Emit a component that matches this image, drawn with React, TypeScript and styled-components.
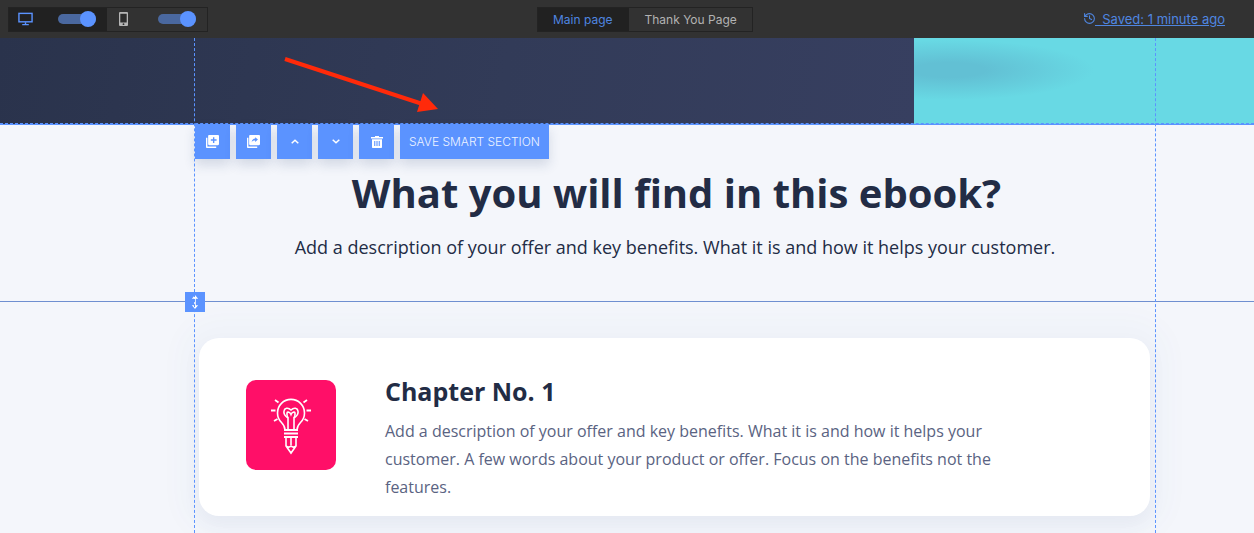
import React from "react";
import styled, { createGlobalStyle } from "styled-components";
import { History } from "lucide-react";

const GlobalStyle = createGlobalStyle`
  html, body { margin: 0; padding: 0; background: #f4f6fb; }
  body { height: 533px; overflow: hidden; font-family: "Open Sans", "Noto Sans", sans-serif; }
`;

const App: React.FC = () => {
  return (
    <Page>
      <GlobalStyle />
      <TopBar>
        <DeviceGroup>
          <DeviceCell $active>
            <svg width="15" height="14" viewBox="0 0 16 14" fill="none" stroke="#5b93ff">
              <rect x="1" y="1" width="14" height="9" strokeWidth="1.500" />
              <path d="M8 10.500v2M4.500 13h7" strokeWidth="1.500" />
            </svg>
            <Toggle />
          </DeviceCell>
          <DeviceCell>
            <svg width="9" height="14" viewBox="0 0 9 14">
              <rect x="0" y="0" width="9" height="14" rx="1" fill="#b5b5b5" />
              <rect x="1.300" y="1.800" width="6.400" height="8.700" fill="#2c2c2c" />
              <circle cx="4.500" cy="12.200" r="0.900" fill="#2c2c2c" />
            </svg>
            <Toggle />
          </DeviceCell>
        </DeviceGroup>
        <PageTabs>
          <PageTab $active>Main page</PageTab>
          <PageTab>Thank You Page</PageTab>
        </PageTabs>
        <SavedLink>
          <History size={13} strokeWidth={2} />
          <span>&nbsp;&nbsp;Saved: 1 minute ago</span>
        </SavedLink>
      </TopBar>

      <Hero>
        <HeroDark>
          <Arrow width="170" height="80" viewBox="0 0 170 80">
            <line x1="1" y1="2" x2="137" y2="46.500" stroke="#ff2a0a" strokeWidth="4" />
            <polygon points="139,36 154,52 133,55" fill="#ff2a0a" />
          </Arrow>
        </HeroDark>
        <HeroLight>
          <HeroShade />
        </HeroLight>
      </Hero>

      <Section>
        <Toolbar>
          <ToolButton>
            <svg width="13" height="13" viewBox="0 0 14 14" fill="#fff">
              <path d="M0 3h1.500v9.500H11V14H1.200C.5 14 0 13.500 0 12.800z" />
              <path fillRule="evenodd" d="M3.500 0h9.300c.7 0 1.200.5 1.200 1.200v8.600c0 .7-.5 1.200-1.200 1.200H3.500c-.7 0-1.200-.5-1.200-1.200V1.200C2.300.5 2.800 0 3.500 0zM7.500 2.300v2.300H5.200v1.700h2.300v2.400h1.500V6.300h2.400V4.600H9V2.300z" />
            </svg>
          </ToolButton>
          <ToolButton>
            <svg width="13" height="13" viewBox="0 0 14 14" fill="#fff">
              <path d="M0 3h1.500v9.500H11V14H1.200C.5 14 0 13.500 0 12.800z" />
              <path fillRule="evenodd" d="M3.500 0h9.300c.7 0 1.200.5 1.200 1.200v8.600c0 .7-.5 1.200-1.200 1.200H3.500c-.7 0-1.200-.5-1.200-1.200V1.200C2.300.5 2.800 0 3.500 0zM8.800 2.400v1.500C6.800 4 5.500 5.300 5 7.700c.9-1.200 2.200-1.700 3.800-1.700v1.500l3-2.600z" />
            </svg>
          </ToolButton>
          <ToolButton>
            <svg width="8" height="5" viewBox="0 0 8 5" fill="none" stroke="#fff" strokeWidth="1.500">
              <path d="M.7 4.300L4 1.200l3.300 3.100" />
            </svg>
          </ToolButton>
          <ToolButton>
            <svg width="8" height="5" viewBox="0 0 8 5" fill="none" stroke="#fff" strokeWidth="1.500">
              <path d="M.7.700L4 3.800 7.300.7" />
            </svg>
          </ToolButton>
          <ToolButton>
            <svg width="12" height="12" viewBox="0 0 12 12" fill="#fff">
              <path d="M4 0h4v1h4v1.500H0V1h4z" />
              <path fillRule="evenodd" d="M1 3.300h10V11c0 .6-.4 1-1 1H2c-.6 0-1-.4-1-1zM3.200 5v5h1.100V5zM5.450 5v5h1.100V5zM7.700 5v5h1.100V5z" />
            </svg>
          </ToolButton>
          <SaveButton>SAVE SMART SECTION</SaveButton>
        </Toolbar>

        <Heading>What you will find in this ebook?</Heading>
        <Lead>Add a description of your offer and key benefits. What it is and how it helps your customer.</Lead>
      </Section>

      <Divider>
        <ResizeHandle>
          <svg width="10" height="14" viewBox="0 0 10 14" fill="#fff">
            <path d="M5 0l3.200 3.700H5.800v6.600h2.400L5 14l-3.200-3.700h2.400V3.700H1.800z" />
          </svg>
        </ResizeHandle>
      </Divider>

      <CardWrap>
        <Card>
          <IconTile>
            <svg width="46" height="62" viewBox="0 0 46 62" fill="none" stroke="#fff" strokeWidth="1.600">
              <path d="M17 36c0-3-1-5-3.500-7.500a13.500 13.500 0 1 1 19 0C30 31 29 33 29 36" />
              <path d="M20 36V24c-3-2-4.500-4.500-4-7 .5-3 4-4 7-1 3-3 6.500-2 7 1 .5 2.500-1 5-4 7v12" />
              <path d="M20 24c-1-2-1.500-3-1-5 .5-1.500 3-1 4 1.500 1-2.500 3.500-3 4-1.500.5 2 0 3-1 5" />
              <path d="M16 36h14M16 39.500h14M16 43h14" strokeWidth="1.800" />
              <path d="M18 43v9l5 7 5-7v-9M23 43v8M18 52c2 1.500 3.500 1.500 5 0 1.500 1.500 3 1.500 5 0" />
              <path d="M7 6l3.500 2.500M39 6l-3.500 2.500M3 16.500h4.500M43 16.500h-4.500M6 27l3.500-2M40 27l-3.500-2" strokeWidth="1.800" />
            </svg>
          </IconTile>
          <CardBody>
            <CardTitle>Chapter No. 1</CardTitle>
            <CardText>
              Add a description of your offer and key benefits. What it is and how it helps your customer. A few words about your product or offer. Focus on the benefits not the features.
            </CardText>
          </CardBody>
        </Card>
      </CardWrap>

      <GuideLine $side="left" />
      <GuideLine $side="right" />
    </Page>
  );
};

const Page = styled.div`
  position: relative;
  width: 1254px;
  height: 533px;
  overflow: hidden;
  background: #f4f6fb;
`;

const TopBar = styled.div`
  height: 38px;
  background: #323232;
  display: grid;
  grid-template-columns: 529px auto 1fr;
  align-items: center;
  padding: 0 29px 0 8px;
  box-sizing: border-box;
  font-family: Inter, "Liberation Sans", sans-serif;
  font-size: 12px;
`;

const DeviceGroup = styled.div`
  display: flex;
  justify-self: start;
  width: 200px;
  height: 25px;
  box-sizing: border-box;
  border: 1px solid #232323;
`;

const DeviceCell = styled.div<{ $active?: boolean }>`
  flex: 1;
  display: flex;
  align-items: center;
  justify-content: space-between;
  padding: 0 11px 0 ${(p) => (p.$active ? "9px" : "12px")};
  box-sizing: border-box;
  background: ${(p) => (p.$active ? "#212121" : "#323232")};
`;

const Toggle = styled.div`
  position: relative;
  width: 38px;
  height: 10px;
  border-radius: 5px;
  background: #4a689f;
  &::after {
    content: "";
    position: absolute;
    right: 0;
    top: -3px;
    width: 16px;
    height: 16px;
    border-radius: 50%;
    background: #5b93ff;
  }
`;

const PageTabs = styled.div`
  display: flex;
  height: 25px;
  box-sizing: border-box;
  border: 1px solid #232323;
`;

const PageTab = styled.div<{ $active?: boolean }>`
  display: flex;
  align-items: center;
  padding: ${(p) => (p.$active ? "0 16px 0 15px" : "0 15px 0 16px")};
  background: ${(p) => (p.$active ? "#212121" : "#323232")};
  color: ${(p) => (p.$active ? "#4f86e0" : "#b2b2b2")};
`;

const SavedLink = styled.a`
  justify-self: end;
  display: flex;
  align-items: center;
  margin-top: -1px;
  color: #4f86e0;
  font-size: 13px;
  svg {
    margin-right: -1px;
  }
  span {
    text-decoration: underline;
  }
`;

const Hero = styled.div`
  position: relative;
  height: 86px;
  display: flex;
  border-bottom: 1px solid #5b93ff;
  margin-bottom: -1px;
  &::after {
    content: "";
    position: absolute;
    left: 0;
    right: 0;
    bottom: 0;
    border-bottom: 1px dashed #5b93ff;
  }
`;

const HeroDark = styled.div`
  position: relative;
  width: 914px;
  background: linear-gradient(100deg, #2a334c 0%, #323b58 55%, #373f60 100%);
`;

const Arrow = styled.svg`
  position: absolute;
  left: 284px;
  top: 19px;
`;

const HeroLight = styled.div`
  position: relative;
  flex: 1;
  overflow: hidden;
  background: #68d9e4;
`;

const HeroShade = styled.div`
  position: absolute;
  left: -110px;
  top: 2px;
  width: 290px;
  height: 60px;
  border-radius: 50%;
  background: radial-gradient(closest-side, #62c0d4 25%, rgba(104, 217, 228, 0) 100%);
`;

const Section = styled.div`
  position: relative;
  height: 177px;
  display: flex;
  flex-direction: column;
  align-items: center;
  padding-left: 96px;
  box-sizing: border-box;
`;

const Toolbar = styled.div`
  position: absolute;
  left: 195px;
  top: 0;
  display: flex;
  gap: 6px;
`;

const ToolButton = styled.div`
  width: 35px;
  height: 35px;
  display: flex;
  align-items: center;
  justify-content: center;
  background: #5b93ff;
  box-shadow: 0 6px 12px rgba(40, 60, 110, 0.16);
`;

const SaveButton = styled(ToolButton)`
  width: 149px;
  color: #eef3ff;
  font-family: Inter, "Liberation Sans", sans-serif;
  font-size: 12px;
  font-weight: 300;
`;

const Heading = styled.h1`
  margin: 41px 0 0 3px;
  font-size: 40px;
  line-height: 56px;
  font-weight: 700;
  color: #222c45;
`;

const Lead = styled.p`
  margin: 12px 0 0;
  font-size: 18px;
  line-height: 28px;
  color: #222c45;
`;

const Divider = styled.div`
  position: relative;
  height: 1px;
  background: #6f8fd0;
`;

const ResizeHandle = styled.div`
  position: absolute;
  left: 185px;
  top: -9px;
  width: 20px;
  height: 20px;
  display: flex;
  align-items: center;
  justify-content: center;
  background: #5b93ff;
`;

const CardWrap = styled.div`
  padding: 36px 0 0 199px;
`;

const Card = styled.div`
  width: 951px;
  height: 178px;
  display: flex;
  padding: 42px 0 0 47px;
  box-sizing: border-box;
  border-radius: 20px;
  background: #fff;
  box-shadow: 0 8px 18px rgba(60, 80, 140, 0.06), 0 0 24px 22px rgba(60, 80, 140, 0.018);
`;

const IconTile = styled.div`
  width: 90px;
  height: 90px;
  flex-shrink: 0;
  display: flex;
  align-items: center;
  justify-content: center;
  border-radius: 10px;
  background: #ff0f68;
`;

const CardBody = styled.div`
  margin-left: 49px;
  width: 625px;
  margin-top: -4px;
`;

const CardTitle = styled.h3`
  margin: 0;
  font-size: 25px;
  line-height: 30px;
  font-weight: 700;
  color: #222c45;
`;

const CardText = styled.p`
  margin: 11px 0 0;
  font-size: 16px;
  line-height: 28px;
  color: #5a6382;
`;

const GuideLine = styled.div<{ $side: "left" | "right" }>`
  position: absolute;
  top: 38px;
  bottom: 0;
  left: ${(p) => (p.$side === "left" ? "194px" : "1155px")};
  width: 0;
  border-left: 1px dashed #5b93ff;
`;

export default App;
